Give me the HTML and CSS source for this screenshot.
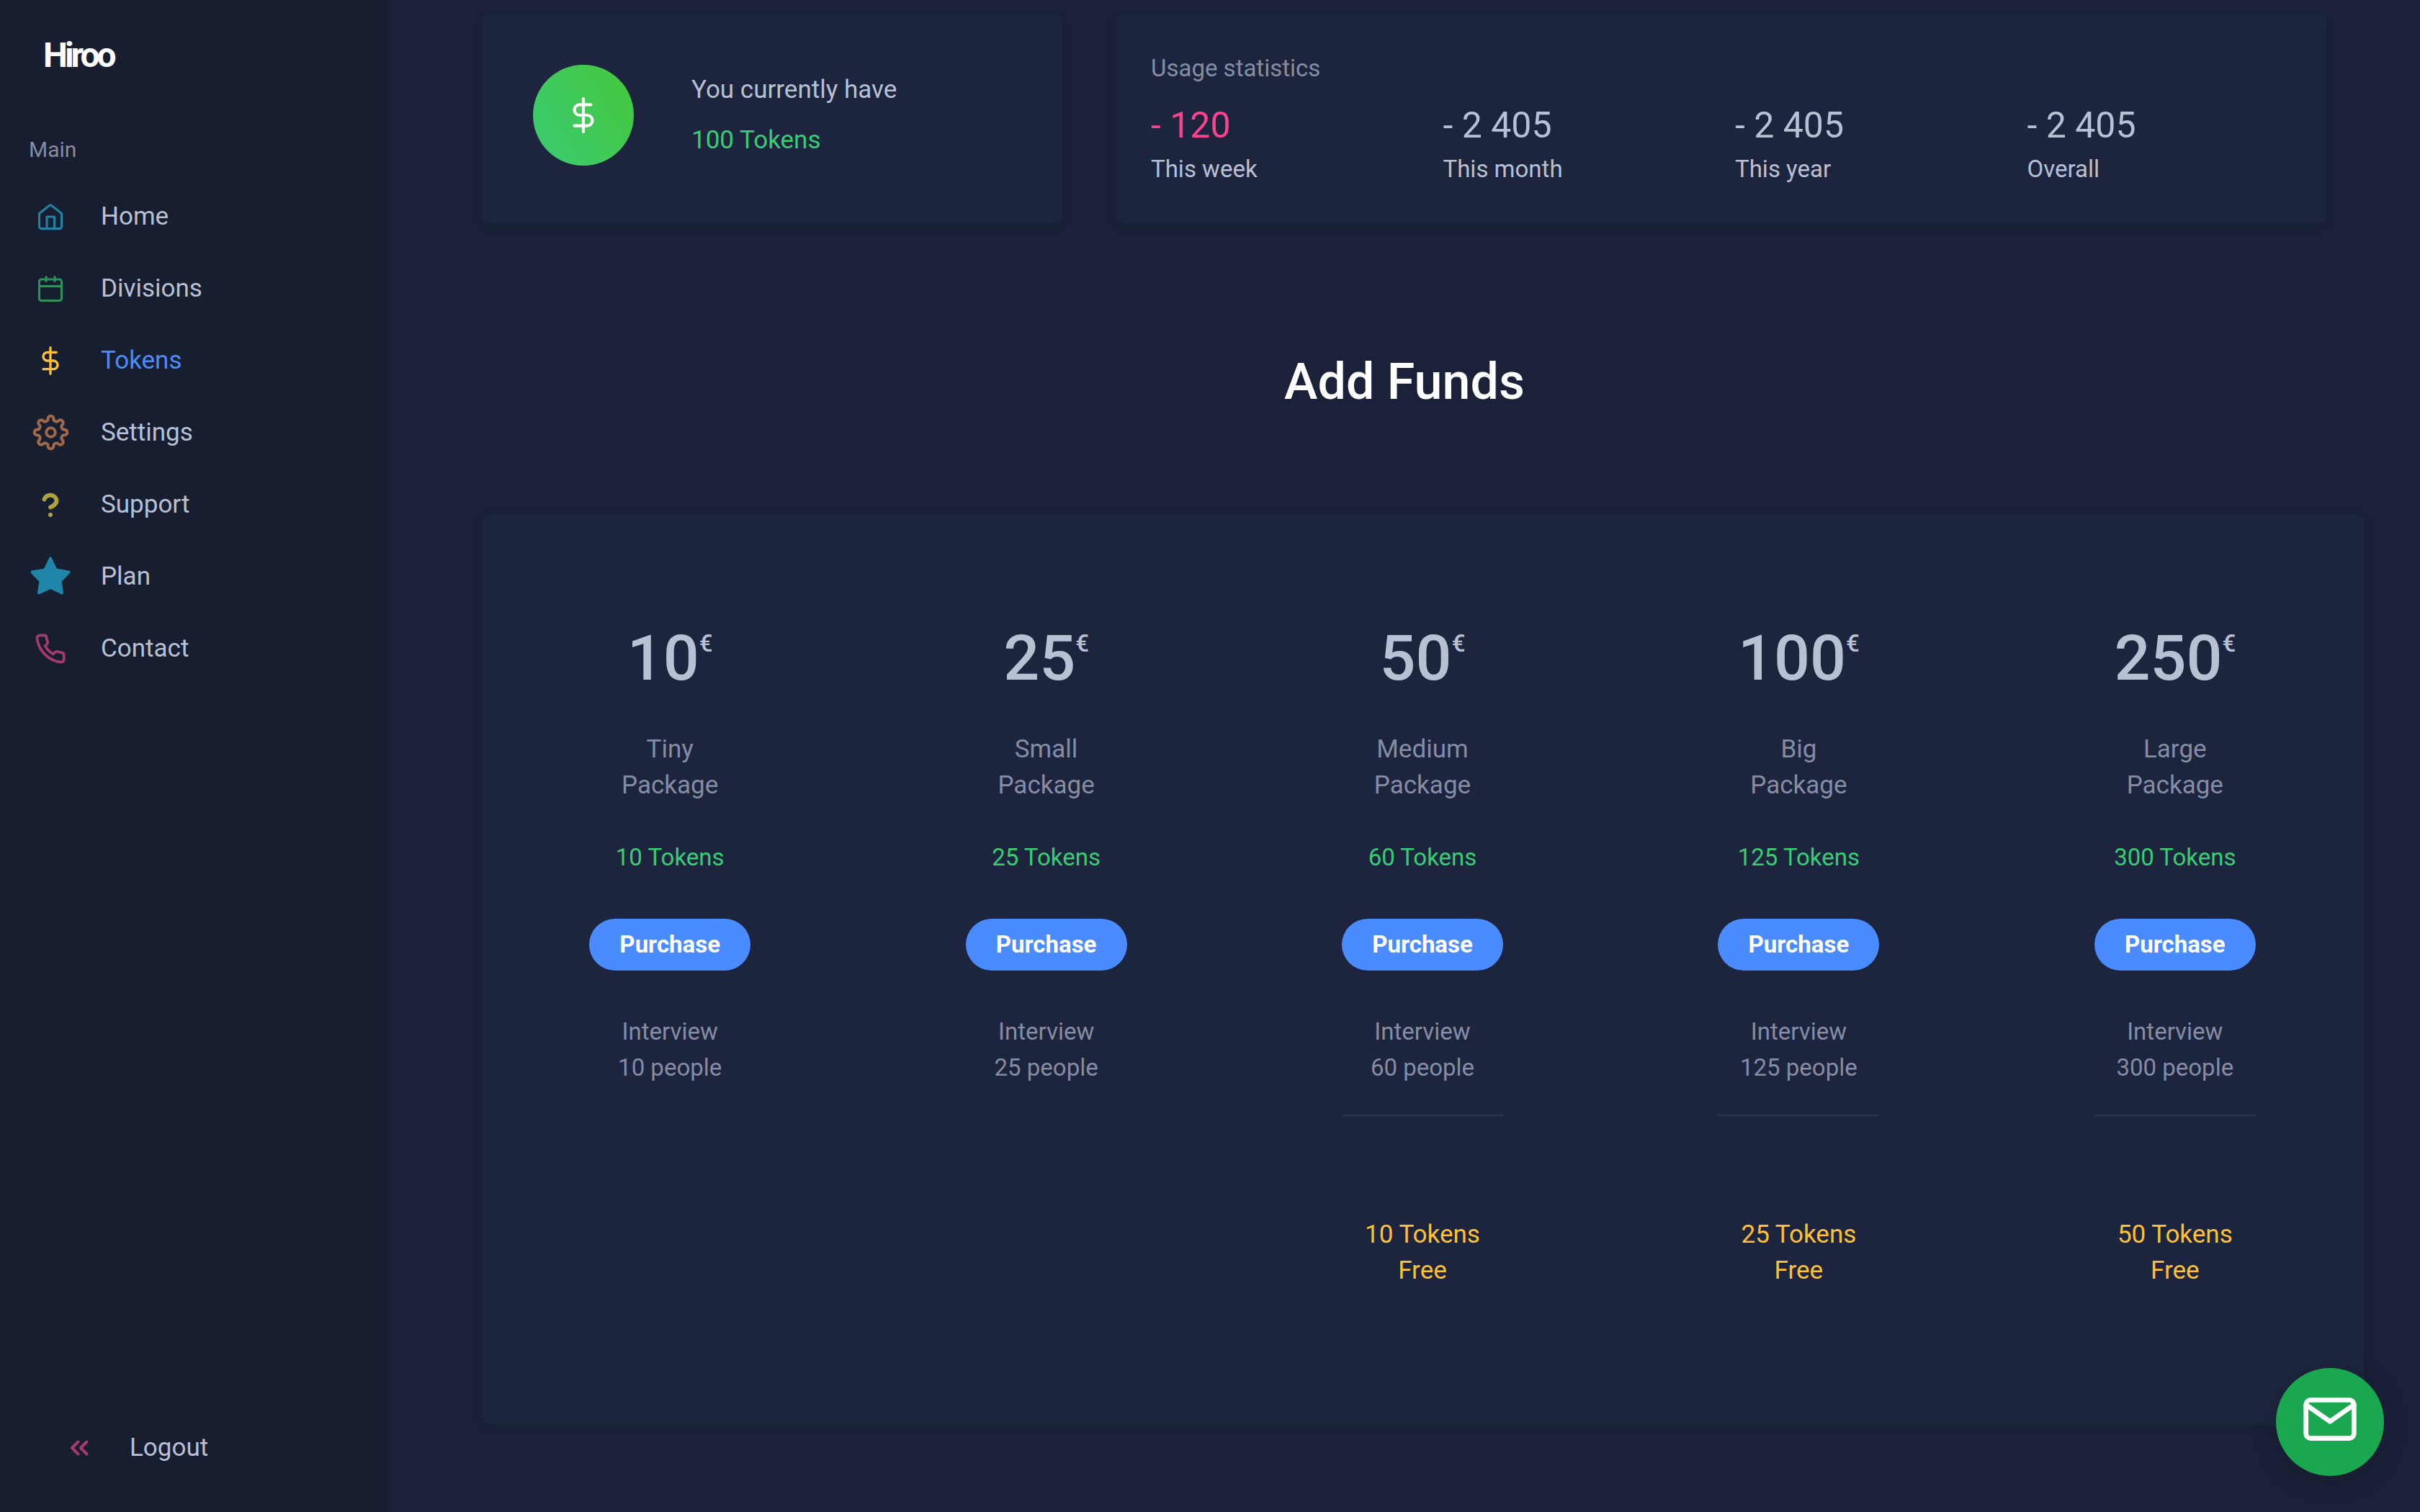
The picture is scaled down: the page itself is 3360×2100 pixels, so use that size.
FILE: index.html
```html
<!DOCTYPE html>
<html lang="en">
<head>
<meta charset="utf-8">
<title>Hiroo – Tokens</title>
<meta name="viewport" content="width=device-width, initial-scale=1">
<link rel="stylesheet" href="styles.css">
</head>
<body>
<div class="app">
  <aside class="sidebar">
    <a class="brand" href="#">Hiroo</a>
    <h2 class="nav-title">Main</h2>
    <nav class="nav" aria-label="Main">
      <a class="nav-link" href="#"><svg class="icon cyan" viewBox="0 0 60 60"><path d="M14.500 25.500 28.500 14.300q1.500-1.200 3 0L45.500 25.500V43.500a3 3 0 0 1-3 3h-25a3 3 0 0 1-3-3zM25 46V30h10.500V46"/></svg>Home</a>
      <a class="nav-link" href="#"><svg class="icon green" viewBox="0 0 60 60"><rect x="14.500" y="17" width="31" height="29.500" rx="3"/><path d="M14.500 26.500h31M24 13.500v6M36 13.500v6"/></svg>Divisions</a>
      <a class="nav-link active" href="#" aria-current="page"><svg class="icon yellow" viewBox="-6 -6 36 36"><path class="unit-stroke" d="M12 1v22M17 5H9.500a3.500 3.500 0 0 0 0 7h5a3.500 3.500 0 0 1 0 7H6"/></svg>Tokens</a>
      <a class="nav-link" href="#"><svg class="icon orange" viewBox="-30.500 -29.500 60 60"><path d="M19.600 3.900A4 4 0 0 0 16.600 11.100A4 4 0 0 1 11.100 16.600A4 4 0 0 0 3.900 19.600A4 4 0 0 1-3.900 19.600A4 4 0 0 0-11.100 16.600A4 4 0 0 1-16.600 11.100A4 4 0 0 0-19.600 3.900A4 4 0 0 1-19.600-3.900A4 4 0 0 0-16.600-11.100A4 4 0 0 1-11.100-16.600A4 4 0 0 0-3.900-19.600A4 4 0 0 1 3.900-19.600A4 4 0 0 0 11.100-16.600A4 4 0 0 1 16.600-11.100A4 4 0 0 0 19.600-3.900A4 4 0 0 1 19.600 3.900z"/><circle r="6.300"/></svg>Settings</a>
      <a class="nav-link" href="#"><svg class="icon olive" viewBox="0 0 60 60"><path d="M21.500 22.500a8.700 8 0 0 1 17 1.500c0 4.500-3.800 7.500-8.300 9.500M30 44v.1"/></svg>Support</a>
      <a class="nav-link" href="#"><svg class="icon star" viewBox="0 0 60 60"><path d="M30 4.500 37.600 20.500 55.500 23.500 43.500 36 46 52.500 30 45 14 52.500 16.500 36 4.500 23.500 22.400 20.500z"/></svg>Plan</a>
      <a class="nav-link" href="#"><svg class="icon magenta" viewBox="-4 -4 32 32"><path class="unit-stroke" d="M22 16.920v3a2 2 0 0 1-2.180 2 19.790 19.790 0 0 1-8.630-3.070 19.500 19.500 0 0 1-6-6 19.790 19.790 0 0 1-3.070-8.670A2 2 0 0 1 4.110 2h3a2 2 0 0 1 2 1.720 12.840 12.840 0 0 0 .7 2.810 2 2 0 0 1-.45 2.110L8.090 9.910a16 16 0 0 0 6 6l1.270-1.270a2 2 0 0 1 2.110-.45 12.840 12.840 0 0 0 2.810.7A2 2 0 0 1 22 16.920z"/></svg>Contact</a>
    </nav>
    <a class="nav-link logout" href="#"><svg class="icon magenta" viewBox="0 0 60 60"><path d="M28.500 21.500 20 30l8.500 8.500M40.500 21.500 32 30l8.500 8.500"/></svg>Logout</a>
  </aside>

  <main class="content">
    <div class="summary">
      <section class="card balance">
        <div class="coin"><svg viewBox="0 0 24 24"><path d="M12 1v22M17 5H9.500a3.500 3.500 0 0 0 0 7h5a3.500 3.500 0 0 1 0 7H6"/></svg></div>
        <div class="balance-text">
          <p>You currently have</p>
          <p class="success">100 Tokens</p>
        </div>
      </section>
      <section class="card usage">
        <h2 class="usage-title">Usage statistics</h2>
        <dl class="stats">
          <div class="stat spent"><dd>- 120</dd><dt>This week</dt></div>
          <div class="stat"><dd>- 2 405</dd><dt>This month</dt></div>
          <div class="stat"><dd>- 2 405</dd><dt>This year</dt></div>
          <div class="stat"><dd>- 2 405</dd><dt>Overall</dt></div>
        </dl>
      </section>
    </div>

    <h1 class="title">Add Funds</h1>

    <section class="card pricing">
      <article class="plan">
        <h2 class="price">10<sup>€</sup></h2>
        <p class="name">Tiny<br>Package</p>
        <p class="tokens">10 Tokens</p>
        <button class="buy" type="button">Purchase</button>
        <p class="people">Interview<br>10 people</p>
      </article>
      <article class="plan">
        <h2 class="price">25<sup>€</sup></h2>
        <p class="name">Small<br>Package</p>
        <p class="tokens">25 Tokens</p>
        <button class="buy" type="button">Purchase</button>
        <p class="people">Interview<br>25 people</p>
      </article>
      <article class="plan">
        <h2 class="price">50<sup>€</sup></h2>
        <p class="name">Medium<br>Package</p>
        <p class="tokens">60 Tokens</p>
        <button class="buy" type="button">Purchase</button>
        <p class="people">Interview<br>60 people</p>
        <hr class="rule">
        <p class="bonus">10 Tokens<br>Free</p>
      </article>
      <article class="plan">
        <h2 class="price">100<sup>€</sup></h2>
        <p class="name">Big<br>Package</p>
        <p class="tokens">125 Tokens</p>
        <button class="buy" type="button">Purchase</button>
        <p class="people">Interview<br>125 people</p>
        <hr class="rule">
        <p class="bonus">25 Tokens<br>Free</p>
      </article>
      <article class="plan">
        <h2 class="price">250<sup>€</sup></h2>
        <p class="name">Large<br>Package</p>
        <p class="tokens">300 Tokens</p>
        <button class="buy" type="button">Purchase</button>
        <p class="people">Interview<br>300 people</p>
        <hr class="rule">
        <p class="bonus">50 Tokens<br>Free</p>
      </article>
    </section>
  </main>
</div>
<button class="fab" type="button" aria-label="Send a message"><svg viewBox="0 0 24 24"><rect x="2" y="4" width="20" height="16" rx="2"/><path d="m22 6-10 7L2 6"/></svg></button>
</body>
</html>
```
FILE: styles.css
```css
*, *::before, *::after { box-sizing: border-box; }

body {
  margin: 0;
  background: #1a2139;
  color: #b8c0d4;
  font-family: Roboto, "Liberation Sans", sans-serif;
  font-size: 35px;
  line-height: 50px;
}

h1, h2, p, dl, dd { margin: 0; font-weight: 400; }
a { color: inherit; text-decoration: none; }
button { border: 0; padding: 0; font: inherit; cursor: pointer; }

.app {
  display: grid;
  grid-template-columns: 540px minmax(0, 1fr);
  min-height: 100vh;
}

/* Sidebar */
.sidebar {
  display: flex;
  flex-direction: column;
  padding: 47px 0 39px;
  background: #161e30;
}
.brand {
  padding-left: 60px;
  color: #fff;
  font-size: 48px;
  font-weight: 700;
  line-height: 60px;
  letter-spacing: -4px;
}
.nav-title {
  padding: 76px 0 18px 40px;
  color: #858ca3;
  font-size: 30px;
}
.nav { display: flex; flex-direction: column; }
.nav-link {
  display: flex;
  align-items: center;
  gap: 40px;
  height: 100px;
  padding-left: 40px;
}
.active { color: #4a8cff; }
.logout { margin-top: auto; padding-left: 80px; }

.icon {
  width: 60px;
  height: 60px;
  fill: none;
  stroke: currentColor;
  stroke-width: 4;
  stroke-linecap: round;
  stroke-linejoin: round;
}
.unit-stroke { stroke-width: 2; }
.cyan { color: #1f84a6; stroke-width: 3; }
.green { color: #2f925e; stroke-width: 3; }
.yellow { color: #ffc033; }
.orange { color: #a0684a; }
.olive { color: #afa33f; stroke-width: 6; }
.star { color: #2085a8; fill: currentColor; }
.magenta { color: #a53a73; }

/* Main column */
.content { padding: 20px 78px 120px 130px; }
.card {
  background: #1d253e;
  border-radius: 10px;
  box-shadow: 0 4px 12px rgba(26, 34, 46, 0.4);
}
.summary {
  display: grid;
  grid-template-columns: 804fr 1682fr;
  gap: 74px;
  margin-right: 52px;
}
.balance {
  display: flex;
  align-items: flex-start;
  gap: 80px;
  padding: 70px;
}
.coin {
  display: grid;
  place-items: center;
  width: 140px;
  height: 140px;
  border-radius: 50%;
  background: linear-gradient(60deg, #3bcb75, #45c83a);
}
.coin svg, .fab svg {
  width: 50px;
  fill: none;
  stroke: #fff;
  stroke-width: 2;
  stroke-linecap: round;
  stroke-linejoin: round;
}
.balance-text {
  display: flex;
  flex-direction: column;
  gap: 20px;
  padding-top: 10px;
}
.success { color: #38cc74; }

.usage { padding: 50px 10px 50px 50px; }
.usage-title { color: #858ca3; font-size: 33px; }
.stats { display: grid; grid-template-columns: repeat(4, 1fr); padding-top: 24px; }
.stat dd { font-size: 50px; line-height: 60px; }
.stat dt { padding-top: 6px; font-size: 33px; }
.spent dd { color: #fb4290; }

.title {
  margin-right: 52px;
  padding: 168px 0 132px;
  color: #fff;
  font-size: 70px;
  font-weight: 500;
  line-height: 104px;
  text-align: center;
}

/* Pricing */
.pricing {
  display: grid;
  grid-template-columns: repeat(5, 1fr);
  min-height: 1264px;
  padding: 28px 0 30px;
}
.plan {
  display: flex;
  flex-direction: column;
  align-items: center;
  margin: 0 28px;
  padding-top: 122px;
  border-right: 2px solid #1c2745;
  text-align: center;
}
.price {
  display: flex;
  align-items: flex-start;
  font-size: 88px;
  font-weight: 500;
  line-height: 100px;
}
.price sup { font-size: 33px; line-height: 60px; }
.name { padding-top: 52px; color: #858ca3; }
.tokens { padding: 50px 0 60px; color: #38cc74; font-size: 33px; }
.buy {
  width: 224px;
  height: 72px;
  border-radius: 36px;
  background: #4a8cff;
  color: #fff;
  font-size: 33px;
  font-weight: 700;
}
.people { padding: 60px 0 40px; color: #858ca3; font-size: 33px; }
.rule { width: 224px; height: 2px; margin: 0; border: 0; background: #2d3550; }
.bonus { padding-top: 140px; color: #ffc033; }

.fab {
  position: fixed;
  right: 50px;
  bottom: 50px;
  display: grid;
  justify-items: center;
  align-content: start;
  width: 150px;
  height: 150px;
  padding-top: 31px;
  border-radius: 50%;
  background: #1ba750;
  box-shadow: 0 6px 30px rgba(22, 28, 40, 0.6);
}
.fab svg { width: 80px; }
```
